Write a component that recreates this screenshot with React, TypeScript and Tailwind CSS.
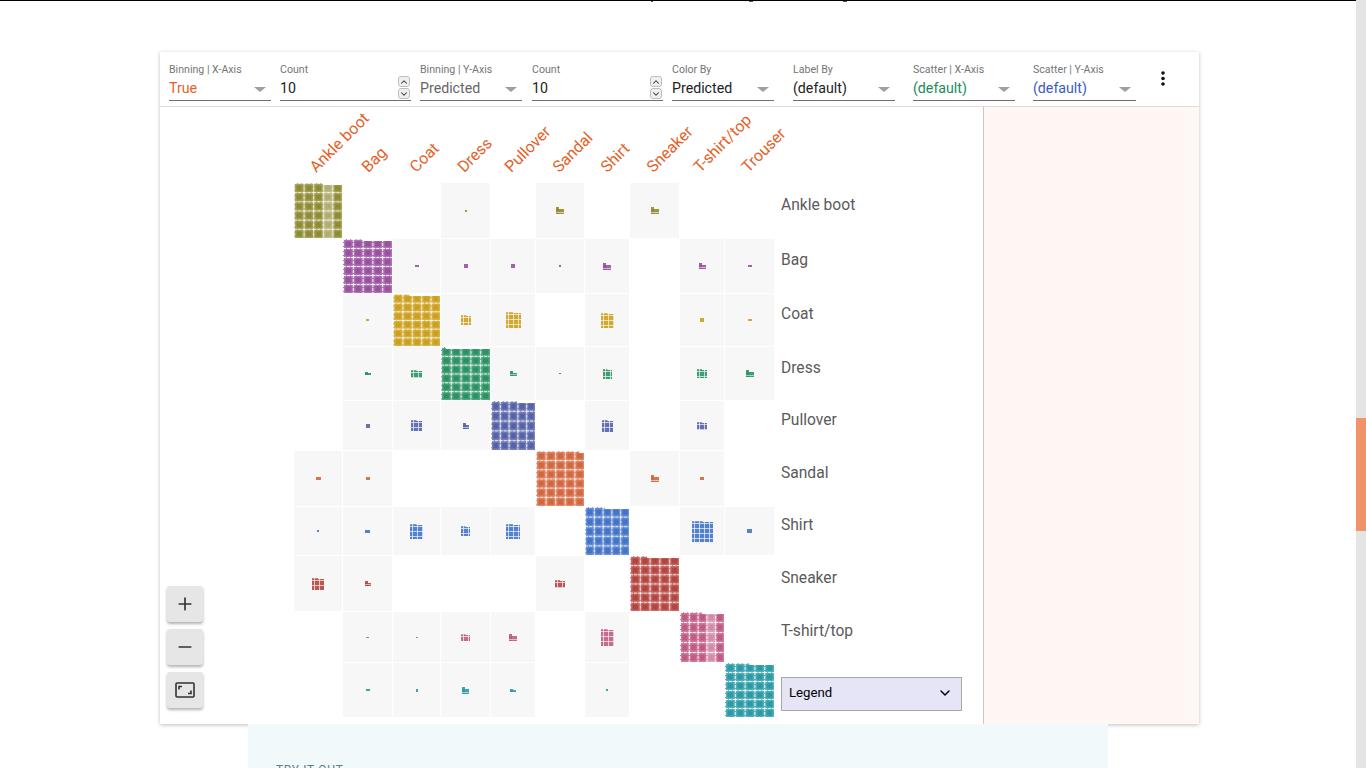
import React from 'react';
import { ChevronDown, ChevronUp, Minus, Plus } from 'lucide-react';

const LABELS = ['Ankle boot', 'Bag', 'Coat', 'Dress', 'Pullover', 'Sandal', 'Shirt', 'Sneaker', 'T-shirt/top', 'Trouser'];
const COLORS = ['#8e8b32', '#98509f', '#cc9f1c', '#2b9163', '#5562a8', '#d2663f', '#4273c8', '#b4443e', '#c05a84', '#2a9aa6'];
const CELL_W = [48, 49, 47, 49, 44, 48, 44, 49, 44, 49];
const CELL_H = [55, 54, 52, 53, 49, 55, 48, 55, 50, 54];
const HEADER_W = ['w-[51.8px]', 'w-[47.8px]', 'w-[48.8px]', 'w-[46.8px]', 'w-[47.8px]', 'w-[47.8px]', 'w-[45.8px]', 'w-[47.8px]', 'w-[47.8px]', 'w-[47.8px]'];

// off-diagonal marks per row: column -> [width, height]
const MARKS: Record<number, [number, number]>[] = [
  { 3: [2, 2], 5: [8, 7], 7: [8, 7] },
  { 2: [4, 2], 3: [4, 4], 4: [4, 4], 5: [2, 2], 6: [8, 7], 8: [7, 6], 9: [4, 2] },
  { 1: [3, 2], 3: [10, 10], 4: [15, 16], 6: [13, 15], 8: [4, 4], 9: [4, 2] },
  { 1: [6, 3], 2: [11, 8], 4: [7, 5], 5: [2, 1], 6: [9, 10], 8: [10, 9], 9: [8, 7] },
  { 1: [4, 4], 2: [11, 11], 3: [6, 6], 6: [11, 12], 8: [10, 8] },
  { 0: [5, 3], 1: [4, 3], 7: [8, 7], 8: [4, 3] },
  { 0: [2, 2], 1: [5, 3], 2: [13, 15], 3: [9, 10], 4: [14, 15], 8: [21, 21], 9: [5, 4] },
  { 0: [12, 12], 1: [6, 5], 5: [10, 8] },
  { 1: [3, 1], 2: [2, 1], 3: [9, 7], 4: [8, 7], 6: [13, 17] },
  { 1: [4, 2], 2: [2, 3], 3: [7, 7], 4: [6, 3], 6: [2, 2] },
];

const BigMosaic = ({ id, color, w, h, notch, fade }: { id: string; color: string; w: number; h: number; notch: number; fade?: boolean }) => {
  const bw = w / 5;
  const bh = h / Math.round(h / 9.4);
  return (
    <svg width={w} height={h} className="block">
      <defs>
        <pattern id={id} width={bw} height={bh} patternUnits="userSpaceOnUse">
          <rect width={bw} height={bh} fill={color} opacity={0.8} />
          <rect x={bw * 0.25} y={bh * 0.25} width={bw * 0.6} height={bh * 0.6} fill={color} />
          <line x1={0} y1={0.5} x2={bw} y2={0.5} stroke="#fff" strokeDasharray="3 1" opacity={0.9} />
          <line x1={0.5} y1={0} x2={0.5} y2={bh} stroke="#fff" strokeDasharray="3 1" opacity={0.9} />
        </pattern>
      </defs>
      <rect width={w} height={h} fill={`url(#${id})`} />
      {fade && <rect x={w * 0.6} width={w * 0.22} height={h} fill="#fff" opacity={0.3} />}
      <rect x={w * notch} width={w * (1 - notch)} height={2} fill="#fff" />
    </svg>
  );
};

const SmallMark = ({ id, color, w, h }: { id: string; color: string; w: number; h: number }) => {
  if (w < 6) {
    return <svg width={w} height={h} className="block"><rect width={w} height={h} fill={color} opacity={0.9} /></svg>;
  }
  // little boot-shaped blobs: a tab on the left with a pale stripe through them
  if (w < 9) {
    const top = Math.round(h * 0.3);
    return (
      <svg width={w} height={h} className="block">
        <rect width={Math.ceil(w * 0.35)} height={h} fill={color} opacity={0.9} />
        <rect y={top} width={w} height={h - top} fill={color} opacity={0.9} />
        {h > 4 && <rect y={h - 2} width={w} height={1} fill="#fff" opacity={0.55} />}
      </svg>
    );
  }
  return (
    <svg width={w} height={h} className="block">
      <defs>
        <pattern id={id} x={2} y={2} width={5} height={5} patternUnits="userSpaceOnUse">
          <line x1={0} y1={0.5} x2={5} y2={0.5} stroke="#fff" opacity={0.65} />
          <line x1={0.5} y1={0} x2={0.5} y2={5} stroke="#fff" opacity={0.65} />
        </pattern>
      </defs>
      <rect y={1} width={w} height={h - 1} fill={color} opacity={0.9} />
      <rect width={w * 0.5} height={1} fill={color} opacity={0.7} />
      <rect width={w} height={h} fill={`url(#${id})`} />
    </svg>
  );
};

const Field = ({ label, value, valueClass, className }: { label: string; value: string; valueClass: string; className: string }) => (
  <div className={className}>
    <div className="text-[10.6px] leading-[13px] text-[#757575]">{label}</div>
    <div className="mt-[3px] h-[22px] flex items-start justify-between border-b border-[#707070] pr-[5px]">
      <span className={`text-[14.2px] leading-[18px] ${valueClass}`}>{value}</span>
      <svg width="12" height="5" viewBox="0 0 12 5" className="mt-[8px]"><path d="M0 0h12L6 5z" fill="#9e9e9e" /></svg>
    </div>
  </div>
);

const CountField = ({ className }: { className: string }) => (
  <div className={className}>
    <div className="text-[10.6px] leading-[13px] text-[#757575]">Count</div>
    <div className="mt-[3px] h-[22px] flex items-start justify-between border-b border-[#707070] pr-[1px]">
      <span className="text-[14.2px] leading-[18px] text-[#222]">10</span>
      <div className="flex flex-col gap-px -mt-[3px]">
        <div className="w-[12px] h-[11px] flex items-center justify-center rounded-[3px] border border-[#bdbdbd] bg-[#f0f0f0]">
          <ChevronUp size={10} strokeWidth={2.5} color="#333" />
        </div>
        <div className="w-[12px] h-[11px] flex items-center justify-center rounded-[3px] border border-[#bdbdbd] bg-[#f0f0f0]">
          <ChevronDown size={10} strokeWidth={2.5} color="#333" />
        </div>
      </div>
    </div>
  </div>
);

const ZoomButton = ({ children }: { children: React.ReactNode }) => (
  <div className="w-[36px] h-[36px] flex items-center justify-center rounded-[3px] bg-[#e6e6e6] shadow-[0_2px_3px_rgba(0,0,0,0.3)] text-[#333]">
    {children}
  </div>
);

const NOTCH = [0.62, 0.4, 0.35, 0.1, 0.6, 0.9, 0.45, 0.35, 0.5, 0.5];

export default function App() {
  return (
    <div className="h-[768px] overflow-hidden flex bg-white font-['Roboto',sans-serif]">
      <div className="flex-1 min-w-0 flex flex-col">
        {/* scrolled-away text above: only the descenders still show */}
        <div className="h-[52px] shrink-0 border-t border-black">
          <div className="flex h-px">
            <span className="ml-[651px] w-[2px] bg-[#555]" />
            <span className="ml-[96px] w-[4px] bg-[#555]" />
            <span className="ml-[90px] w-[4px] bg-[#555]" />
          </div>
        </div>

        <div className="ml-[160px] w-[1039px] h-[672px] shrink-0 flex flex-col bg-white shadow-[0_1px_4px_rgba(0,0,0,0.25)]">
          {/* toolbar */}
          <div className="h-[55px] shrink-0 flex items-start pl-[9px] pt-[11px] border-b border-[#dcdcdc]">
            <Field label="Binning | X-Axis" value="True" valueClass="text-[#e4621f]" className="w-[102px]" />
            <CountField className="w-[131px] ml-[9px]" />
            <Field label="Binning | Y-Axis" value="Predicted" valueClass="text-[#666]" className="w-[102px] ml-[9px]" />
            <CountField className="w-[131px] ml-[10px]" />
            <Field label="Color By" value="Predicted" valueClass="text-[#222]" className="w-[102px] ml-[9px]" />
            <Field label="Label By" value="(default)" valueClass="text-[#222]" className="w-[102px] ml-[19px]" />
            <Field label="Scatter | X-Axis" value="(default)" valueClass="text-[#1d8a5a]" className="w-[102px] ml-[18px]" />
            <Field label="Scatter | Y-Axis" value="(default)" valueClass="text-[#3b5bc0]" className="w-[103px] ml-[18px]" />
            <svg width="4" height="16" viewBox="0 0 4 16" className="ml-[25px] mt-[8px]">
              <circle cx="2" cy="2" r="1.8" fill="#111" />
              <circle cx="2" cy="7.5" r="1.8" fill="#111" />
              <circle cx="2" cy="13" r="1.8" fill="#111" />
            </svg>
          </div>

          <div className="flex-1 min-h-0 flex">
            {/* confusion matrix */}
            <div className="relative w-[824px] shrink-0 border-r border-[#cdc5c2] pl-[134px]">
              <div className="h-[76px] flex pl-[25px]">
                {LABELS.map((l, i) => (
                  <div key={l} className={`${HEADER_W[i]} shrink-0 flex items-end pb-[7px]`}>
                    <span className="w-0 whitespace-nowrap origin-bottom-left -rotate-45 text-[16px] leading-[18px] text-[#e4622a]">{l}</span>
                  </div>
                ))}
              </div>
              <div className="grid gap-px grid-cols-[48px_49px_47px_49px_44px_48px_44px_49px_44px_49px_1fr] grid-rows-[55px_54px_52px_53px_49px_55px_48px_55px_50px_54px]">
                {LABELS.map((label, r) => (
                  <React.Fragment key={label}>
                    {LABELS.map((_, c) => {
                      const mark = MARKS[r][c];
                      if (c === r) {
                        return <BigMosaic key={c} id={`big-${r}`} color={COLORS[r]} w={CELL_W[c]} h={CELL_H[r]} notch={NOTCH[r]} fade={r === 0 || r === 8} />;
                      }
                      if (!mark) return <div key={c} />;
                      return (
                        <div key={c} className="flex items-center justify-center bg-[#f7f7f7]">
                          <SmallMark id={`m-${r}-${c}`} color={COLORS[r]} w={mark[0]} h={mark[1]} />
                        </div>
                      );
                    })}
                    {r < 9 ? (
                      <div className="flex items-center pl-[6px] pb-[10px] text-[15.6px] text-[#5a5a5a]">{label}</div>
                    ) : (
                      <div className="flex items-end pl-[6px] pb-[6px]">
                        <div className="w-[181px] h-[34px] flex items-center justify-between pl-[7px] pr-[8px] pb-[2px] border border-[#a9a9a9] bg-[#e5e5f7] text-[13.2px] text-black">
                          Legend
                          <ChevronDown size={16} strokeWidth={2.25} />
                        </div>
                      </div>
                    )}
                  </React.Fragment>
                ))}
              </div>

              {/* zoom controls float over the chart */}
              <div className="absolute left-[7px] bottom-[16px] flex flex-col gap-[7px]">
                <ZoomButton><Plus size={20} strokeWidth={2} /></ZoomButton>
                <ZoomButton><Minus size={20} strokeWidth={2} /></ZoomButton>
                <ZoomButton>
                  <svg width="20" height="16" viewBox="0 0 20 16" fill="none" stroke="#333" strokeWidth="1.6">
                    <rect x="1" y="1" width="18" height="14" rx="1" />
                    <path d="M7 4.5H4v3M13 11.5h3v-3" />
                  </svg>
                </ZoomButton>
              </div>
            </div>
            <div className="flex-1 bg-[#fff7f4]" />
          </div>
        </div>

        <div className="ml-[248px] w-[860px] flex-1 bg-[#f1f9fb] pl-[28px] pt-[39px] overflow-hidden">
          <div className="text-[12px] leading-[14px] tracking-[0.7px] text-[#5f7f8f]">TRY IT OUT</div>
        </div>
      </div>

      {/* page scrollbar */}
      <div className="w-[10px] shrink-0 bg-[#e4e4e4] pt-[418px]">
        <div className="h-[113px] bg-[#f09468]" />
      </div>
    </div>
  );
}
